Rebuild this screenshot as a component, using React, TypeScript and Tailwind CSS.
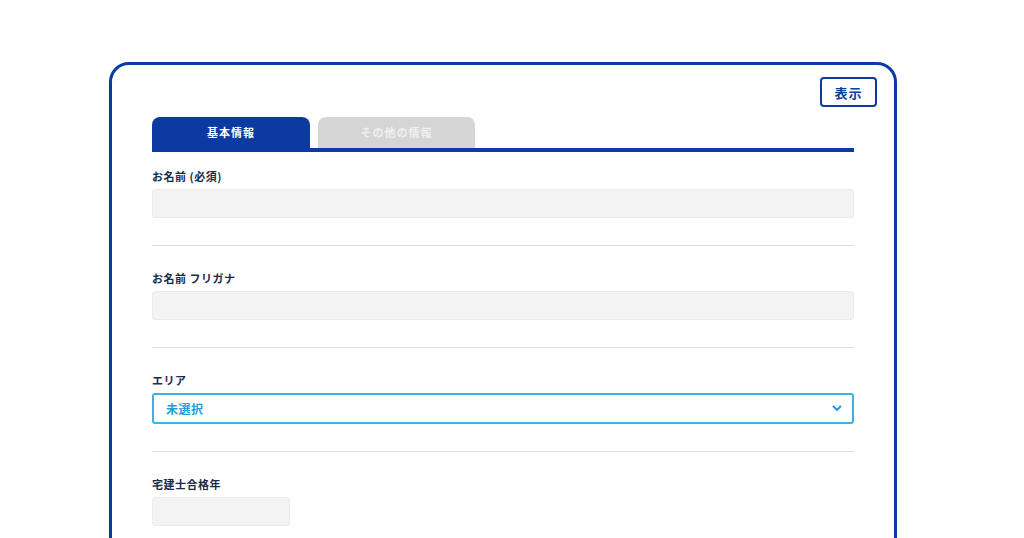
export default function App() {
  const font = { fontFamily: '"Noto Sans CJK JP", "Noto Sans", sans-serif' };
  return (
    <div className="w-[1024px] h-[538px] overflow-hidden bg-white" style={font}>
      <div className="pt-[62px] pl-[109px]">
        <div className="w-[788px] h-[520px] border-[3px] border-[#0a3aa2] rounded-[20px] px-[40px] pt-[12px]">
          <div className="flex justify-end -mr-[23px]">
            <button className="w-[57px] h-[30px] border-2 border-[#0a3aa2] rounded-[4px] text-[#0a3aa2] text-[13px] font-bold leading-none tracking-[1px]">
              表示
            </button>
          </div>
          <div className="mt-[10px] flex gap-[8px] border-b-[4px] border-[#0a3aa2]">
            <div className="w-[158px] h-[31px] rounded-t-[8px] bg-[#0a3aa2] text-white text-[11px] font-bold tracking-[1px] flex items-center justify-center">
              基本情報
            </div>
            <div className="w-[157px] h-[31px] rounded-t-[8px] bg-[#d5d5d5] text-[#f0f0f0] text-[11px] font-bold tracking-[1px] flex items-center justify-center">
              その他の情報
            </div>
          </div>

          <div className="pt-[16px]">
            <Label text="お名前 (必須)" />
            <div className="mt-[5px] h-[29px] rounded-[3px] bg-[#f3f3f3] border border-[#ebebeb]" />
            <div className="mt-[27px] mb-[24px] h-px bg-[#dcdcdc]" />

            <Label text="お名前 フリガナ" />
            <div className="mt-[5px] h-[29px] rounded-[3px] bg-[#f3f3f3] border border-[#ebebeb]" />
            <div className="mt-[27px] mb-[24px] h-px bg-[#dcdcdc]" />

            <Label text="エリア" />
            <div className="mt-[5px] h-[31px] rounded-[3px] border-2 border-[#3ab3e2] flex items-center justify-between pl-[12px] pr-[10px]">
              <span className="text-[12px] font-bold text-[#1f9fd9] tracking-[0.5px]">未選択</span>
              <svg width="10" height="7" viewBox="0 0 10 7">
                <path d="M1.5 1.5 L5 5 L8.5 1.5" fill="none" stroke="#1f9fd9" strokeWidth="2" strokeLinecap="round" strokeLinejoin="round" />
              </svg>
            </div>
            <div className="mt-[27px] mb-[24px] h-px bg-[#dcdcdc]" />

            <Label text="宅建士合格年" />
            <div className="mt-[5px] w-[138px] h-[29px] rounded-[3px] bg-[#f3f3f3] border border-[#ebebeb]" />
          </div>
        </div>
      </div>
    </div>
  );
}

function Label({ text }: { text: string }) {
  return <div className="h-[16px] leading-[16px] text-[11px] font-bold tracking-[0.5px] text-[#1c2b45]">{text}</div>;
}
